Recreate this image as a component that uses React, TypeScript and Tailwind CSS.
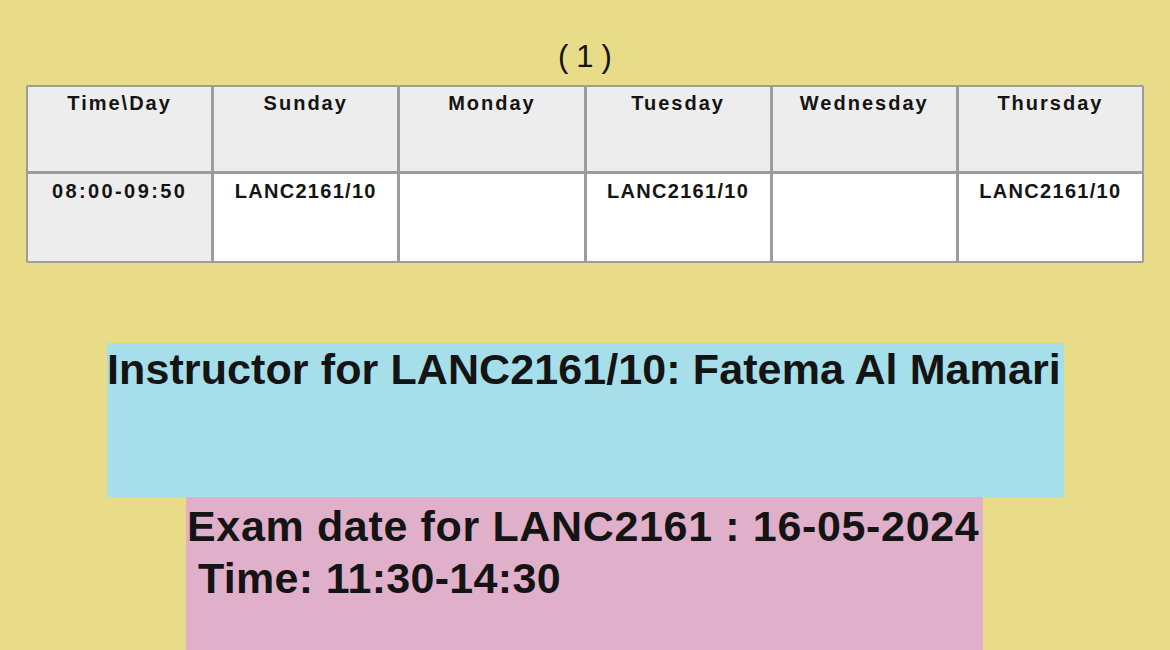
const days = ['Time\\Day', 'Sunday', 'Monday', 'Tuesday', 'Wednesday', 'Thursday'];
const slot = ['08:00-09:50', 'LANC2161/10', '', 'LANC2161/10', '', 'LANC2161/10'];

const App = () => {
  return (
    <div
      className="h-[650px] w-[1170px] overflow-hidden bg-[#e8dc88] text-[#141414]"
      style={{ fontFamily: '"Liberation Sans", Arial, sans-serif' }}
    >
      <div className="pt-[38px] text-center text-[31px] leading-[37px] tracking-[8px] pl-[8px]">(1)</div>

      <div className="ml-[26px] mt-[10px] w-[1118px] grid grid-cols-6 gap-[3px] p-[2px] bg-[#9c9c9c] rounded-[2px]">
        {days.map((d) => (
          <div key={d} className="h-[84px] bg-[#eeeded] pt-[4px] text-center text-[20px] leading-[24px] font-bold tracking-[2px]">
            {d}
          </div>
        ))}
        {slot.map((s, i) => (
          <div
            key={i}
            className={
              i === 0
                ? 'h-[87px] bg-[#eeeded] pt-[5px] text-center text-[20px] leading-[24px] font-bold tracking-[2.4px]'
                : 'h-[87px] bg-white pt-[5px] text-center text-[20px] leading-[24px] font-bold tracking-[1.3px]'
            }
          >
            {s}
          </div>
        ))}
      </div>

      <div className="ml-[107px] mt-[80px] h-[154px] w-[957px] bg-[#a6dfe9]">
        <div className="text-[43px] leading-[52px] font-bold tracking-[0.1px] whitespace-nowrap">
          Instructor for LANC2161/10: Fatema Al Mamari
        </div>
      </div>

      <div className="ml-[186px] h-[160px] w-[797px] bg-[#e0b0cb] pt-[3px] pl-[1px]">
        <div className="text-[43px] leading-[52px] font-bold tracking-[0.65px] whitespace-nowrap">
          Exam date for LANC2161 : 16-05-2024
        </div>
        <div className="pl-[11px] text-[43px] leading-[52px] font-bold tracking-[0.3px] whitespace-nowrap">
          Time: 11:30-14:30
        </div>
      </div>
    </div>
  );
};

export default App;
